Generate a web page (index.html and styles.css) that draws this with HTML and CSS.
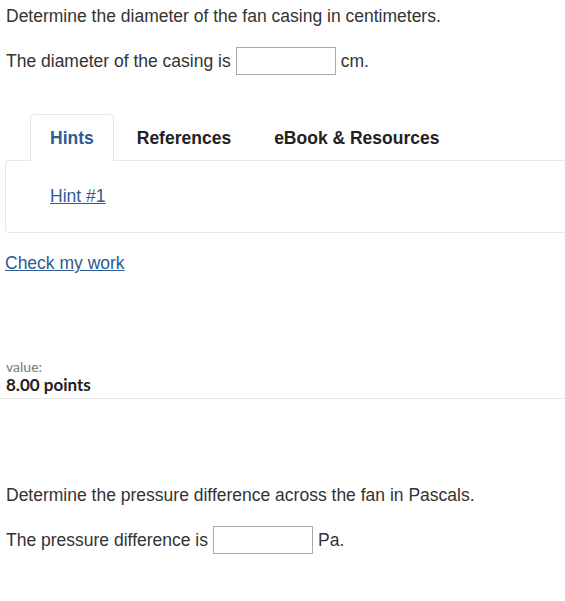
FILE: index.html
```html
<!DOCTYPE html>
<html lang="en">
<head>
    <meta charset="UTF-8">
    <meta name="viewport" content="width=device-width, initial-scale=1.0">
    <title>Question</title>
    <link rel="stylesheet" href="styles.css">
</head>
<body>
    <div class="part">
        <p class="prompt">Determine the diameter of the fan casing in centimeters.</p>
        <p class="answer">The diameter of the casing is <input type="text" class="blank"> cm.</p>
    </div>

    <div class="help">
        <ul class="tabs">
            <li class="tab active">Hints</li>
            <li class="tab">References</li>
            <li class="tab">eBook &amp; Resources</li>
        </ul>
        <div class="panel">
            <a href="#">Hint #1</a>
        </div>
    </div>

    <a href="#" class="check">Check my work</a>

    <div class="value">
        <div class="value-label">value:</div>
        <div class="value-points">8.00 points</div>
    </div>

    <div class="part second">
        <p class="prompt">Determine the pressure difference across the fan in Pascals.</p>
        <p class="answer">The pressure difference is <input type="text" class="blank"> Pa.</p>
    </div>
</body>
</html>
```

FILE: styles.css
```css
body {
    margin: 0;
    font-family: "Liberation Sans", Arial, sans-serif;
    font-size: 17.5px;
    line-height: 22px;
    color: #333;
}
a {
    color: #2f5b94;
}
.part {
    padding: 0 6px;
}
.prompt {
    margin: 5px 0 0;
}
.answer {
    margin: 20px 0 0;
    display: flex;
    align-items: center;
    gap: 5px;
    height: 28px;
}
.blank {
    width: 100px;
    height: 28px;
    box-sizing: border-box;
    margin: 0;
    padding: 0;
    border: 1px solid #a9a9a9;
}
.help {
    margin: 39px 0 0 5px;
}
.tabs {
    list-style: none;
    margin: 0 0 0 25px;
    padding: 0;
    display: flex;
    gap: 3px;
}
.tab {
    font-weight: bold;
    color: #222;
    padding: 0 19px;
    height: 46px;
    line-height: 46px;
    border: 1px solid transparent;
    border-bottom: none;
    border-radius: 4px 4px 0 0;
    box-sizing: border-box;
}
.tab.active {
    color: #2f5b94;
    border-color: #e8e8e8;
    background: #fff;
    margin-bottom: -1px;
    height: 47px;
    position: relative;
}
.panel {
    border: 1px solid #e8e8e8;
    border-right: none;
    border-radius: 4px 0 0 4px;
    height: 73px;
    box-sizing: border-box;
    padding: 24px 0 0 44px;
}
.check {
    display: inline-block;
    margin: 19px 0 0 5px;
}
.value {
    margin-top: 84px;
    padding: 0 6px 3px;
    border-bottom: 1px solid #e8e8e8;
    font-family: Lato, sans-serif;
}
.value-label {
    font-size: 14px;
    line-height: 17px;
    color: #777;
}
.value-points {
    font-size: 17px;
    line-height: 20px;
    font-weight: bold;
    color: #222;
}
.second {
    margin-top: 85px;
}
```
